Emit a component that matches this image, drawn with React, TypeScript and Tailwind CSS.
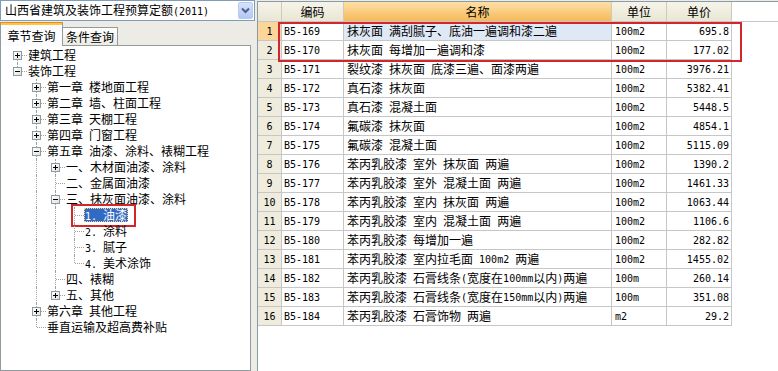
import React from "react";

function T({ s }: { s: string }) {
  const parts = s.split(/([\x00-\x7f]+)/);
  return (
    <>
      {parts.map((p, i) =>
        p === "" ? null : /^[\x00-\x7f]+$/.test(p) ? (
          <span key={i} className="[font-family:'DejaVu_Sans_Mono',monospace] text-[10px] whitespace-pre">
            {p}
          </span>
        ) : (
          <span key={i}>{p}</span>
        )
      )}
    </>
  );
}

type Node = {
  lv: number;
  label: string;
  box: "+" | "-" | null;
  last: boolean;
  cont: boolean[];
  first?: boolean;
  sel?: boolean;
};

const tree: Node[] = [
  { lv: 0, label: "建筑工程", box: "+", last: false, cont: [], first: true },
  { lv: 0, label: "装饰工程", box: "-", last: true, cont: [] },
  { lv: 1, label: "第一章 楼地面工程", box: "+", last: false, cont: [false] },
  { lv: 1, label: "第二章 墙、柱面工程", box: "+", last: false, cont: [false] },
  { lv: 1, label: "第三章 天棚工程", box: "+", last: false, cont: [false] },
  { lv: 1, label: "第四章 门窗工程", box: "+", last: false, cont: [false] },
  { lv: 1, label: "第五章 油漆、涂料、裱糊工程", box: "-", last: false, cont: [false] },
  { lv: 2, label: "一、木材面油漆、涂料", box: "+", last: false, cont: [false, true] },
  { lv: 2, label: "二、金属面油漆", box: null, last: false, cont: [false, true] },
  { lv: 2, label: "三、抹灰面油漆、涂料", box: "-", last: false, cont: [false, true] },
  { lv: 3, label: "1. 油漆", box: null, last: false, cont: [false, true, true], sel: true },
  { lv: 3, label: "2. 涂料", box: null, last: false, cont: [false, true, true] },
  { lv: 3, label: "3. 腻子", box: null, last: false, cont: [false, true, true] },
  { lv: 3, label: "4. 美术涂饰", box: null, last: true, cont: [false, true, true] },
  { lv: 2, label: "四、裱糊", box: null, last: false, cont: [false, true] },
  { lv: 2, label: "五、其他", box: "+", last: true, cont: [false, true] },
  { lv: 1, label: "第六章 其他工程", box: "+", last: false, cont: [false] },
  { lv: 1, label: "垂直运输及超高费补贴", box: null, last: true, cont: [false] },
];

const rows: [string, string, string, string][] = [
  ["B5-169", "抹灰面 满刮腻子、底油一遍调和漆二遍", "100m2", "695.8"],
  ["B5-170", "抹灰面 每增加一遍调和漆", "100m2", "177.02"],
  ["B5-171", "裂纹漆 抹灰面 底漆三遍、面漆两遍", "100m2", "3976.21"],
  ["B5-172", "真石漆 抹灰面", "100m2", "5382.41"],
  ["B5-173", "真石漆 混凝土面", "100m2", "5448.5"],
  ["B5-174", "氟碳漆 抹灰面", "100m2", "4854.1"],
  ["B5-175", "氟碳漆 混凝土面", "100m2", "5115.09"],
  ["B5-176", "苯丙乳胶漆 室外 抹灰面 两遍", "100m2", "1390.2"],
  ["B5-177", "苯丙乳胶漆 室外 混凝土面 两遍", "100m2", "1461.33"],
  ["B5-178", "苯丙乳胶漆 室内 抹灰面 两遍", "100m2", "1063.44"],
  ["B5-179", "苯丙乳胶漆 室内 混凝土面 两遍", "100m2", "1106.6"],
  ["B5-180", "苯丙乳胶漆 每增加一遍", "100m2", "282.82"],
  ["B5-181", "苯丙乳胶漆 室内拉毛面 100m2 两遍", "100m2", "1455.02"],
  ["B5-182", "苯丙乳胶漆 石膏线条(宽度在100mm以内)两遍", "100m", "260.14"],
  ["B5-183", "苯丙乳胶漆 石膏线条(宽度在150mm以内)两遍", "100m", "351.08"],
  ["B5-184", "苯丙乳胶漆 石膏饰物 两遍", "m2", "29.2"],
];

function ExpandBox({ kind }: { kind: "+" | "-" }) {
  return (
    <div className="absolute left-[5px] top-[4px] w-[9px] h-[9px] border border-[#8e9aa6] bg-gradient-to-br from-white to-[#e4e2d8] z-10">
      <div className="absolute left-[1px] top-[3px] w-[5px] h-px bg-black" />
      {kind === "+" && <div className="absolute left-[3px] top-[1px] w-px h-[5px] bg-black" />}
    </div>
  );
}

function TreeRow({ n }: { n: Node }) {
  const cols = [];
  for (let k = 0; k < n.lv; k++) {
    cols.push(
      <div key={k} className="relative w-[19px] h-[16px] shrink-0">
        {n.cont[k] && <div className="absolute left-[9px] top-0 h-[16px] border-l border-dotted border-[#a0a0a0]" />}
      </div>
    );
  }
  return (
    <div className="flex h-[16px] items-center">
      {cols}
      <div className="relative w-[19px] h-[16px] shrink-0">
        <div
          className={
            "absolute left-[9px] border-l border-dotted border-[#a0a0a0] " +
            (n.first ? "top-[8px] h-[8px]" : n.last ? "top-0 h-[8px]" : "top-0 h-[16px]")
          }
        />
        <div className="absolute left-[10px] top-[8px] w-[9px] border-t border-dotted border-[#a0a0a0]" />
        {n.box && <ExpandBox kind={n.box} />}
      </div>
      <div className="relative">
        <div
          className={
            "px-[1px] h-[14px] leading-[14px] whitespace-nowrap " +
            (n.sel ? "bg-[#316ac5] text-white outline outline-1 outline-dotted outline-[#ffd27a] -outline-offset-1" : "")
          }
        >
          <T s={n.label} />
        </div>
        {n.sel && (
          <div className="absolute -left-[13px] -top-[4px] w-[65px] h-[23px] border-2 border-[#d3262b]" />
        )}
      </div>
    </div>
  );
}

const cellBase = "h-full flex items-center border-r border-[#c6c6c6] shrink-0";

export default function App() {
  return (
    <div className="w-[778px] h-[371px] overflow-hidden bg-[#ecebe6] flex text-[12px] text-black [font-family:'Noto_Sans_CJK_SC',sans-serif]">
      {/* Left panel */}
      <div className="w-[257px] shrink-0 flex flex-col">
        <div className="h-[21px] mr-[2px] border border-[#7f9db9] bg-white flex items-center pl-[4px]">
          <div className="flex-1 leading-[14px] whitespace-nowrap">
            <T s="山西省建筑及装饰工程预算定额(2011)" />
          </div>
          <div className="w-[15px] h-[17px] mr-px rounded-[2px] border border-[#b9c9ef] bg-gradient-to-b from-[#d6e2fd] to-[#b3c7f5] flex items-center justify-center">
            <svg width="11" height="9" viewBox="0 0 11 9">
              <path d="M2 2.5 L5.5 6 L9 2.5" fill="none" stroke="#4d6185" strokeWidth="2" />
            </svg>
          </div>
        </div>
        <div className="h-[24px] flex items-end relative z-10">
          <div className="w-[63px] h-[24px] -mb-px bg-[#fcfcfe] border-x border-[#919b9c] flex flex-col">
            <div className="h-px bg-[#e68b2c]" />
            <div className="h-[2px] bg-[#ffc73c]" />
            <div className="flex-1 flex items-center justify-center leading-[14px]">章节查询</div>
          </div>
          <div className="w-[55px] h-[18px] border-t border-r border-[#919b9c] bg-gradient-to-b from-white to-[#ecebe3] flex items-center justify-center leading-[14px]">
            条件查询
          </div>
        </div>
        <div className="flex-1 mr-[6px] bg-white border border-[#919b9c] pt-px pl-[7px]">
          {tree.map((n, i) => (
            <TreeRow key={i} n={n} />
          ))}
        </div>
      </div>

      {/* Right panel */}
      <div className="flex-1 mt-px bg-white border-l border-t border-[#8c9aa5] relative">
        <div className="flex h-[20px] border-b border-[#c6c6c6]">
          <div className={cellBase + " w-[24px] bg-gradient-to-b from-[#f6f4ea] to-[#e9e6d4] border-[#cfcbb6]"} />
          <div className={cellBase + " w-[62px] justify-center bg-gradient-to-b from-[#f6f4ea] to-[#e9e6d4] border-[#cfcbb6]"}>编码</div>
          <div className={cellBase + " w-[268px] justify-center bg-gradient-to-b from-[#fde0a6] to-[#f6b956] border-[#cfcbb6]"}>名称</div>
          <div className={cellBase + " w-[55px] justify-center bg-gradient-to-b from-[#f6f4ea] to-[#e9e6d4] border-[#cfcbb6]"}>单位</div>
          <div className={cellBase + " w-[65px] justify-center bg-gradient-to-b from-[#f6f4ea] to-[#e9e6d4] border-[#cfcbb6]"}>单价</div>
        </div>
        {rows.map((r, i) => (
          <div key={i} className="flex h-[19px] w-[474px] border-b border-[#c6c6c6]">
            <div
              className={
                cellBase +
                " w-[24px] justify-center " +
                (i === 0 ? "bg-[#fad69b]" : "bg-[#efecdd]")
              }
            >
              <T s={String(i + 1)} />
            </div>
            <div className={cellBase + " w-[62px] pl-[2px]"}>
              <T s={r[0]} />
            </div>
            <div className={cellBase + " w-[268px] pl-[3px] whitespace-nowrap overflow-hidden " + (i === 0 ? "bg-[#dfe8f5]" : "")}>
              <T s={r[1]} />
            </div>
            <div className={cellBase + " w-[55px] pl-[3px]"}>
              <T s={r[2]} />
            </div>
            <div className={cellBase + " w-[65px] justify-end pr-[2px]"}>
              <T s={r[3]} />
            </div>
          </div>
        ))}
        <div className="absolute left-[20px] top-[20px] w-[464px] h-[40px] border-2 border-[#d3262b]" />
      </div>
    </div>
  );
}
